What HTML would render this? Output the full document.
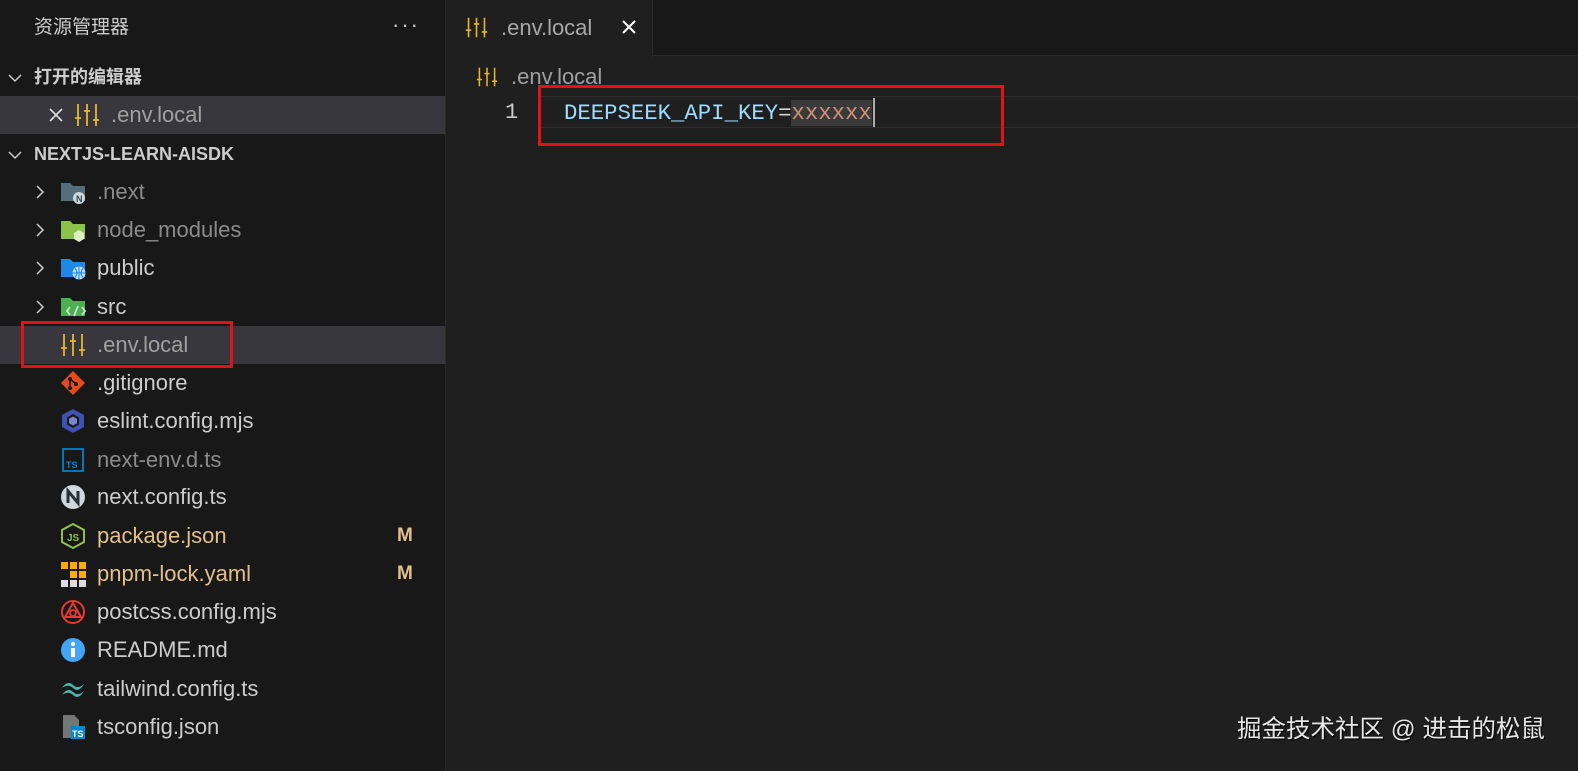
<!DOCTYPE html>
<html><head><meta charset="utf-8"><style>
*{margin:0;padding:0;box-sizing:border-box}
body{width:1578px;height:771px;background:#1f1f1f;overflow:hidden;position:relative;font-family:"Liberation Sans","Noto Sans CJK SC",sans-serif;color:#cccccc}
#side{position:absolute;left:0;top:0;width:446px;height:771px;background:#181818;border-right:1px solid #2b2b2b}
.t{position:absolute;font-size:22px;line-height:38px;white-space:nowrap}
.row{position:absolute;left:0;width:445px;height:38px}
.ic{position:absolute;width:26px;height:26px}
.chev{position:absolute;left:32px;width:16px;height:16px}
svg{display:block}
</style></head><body>
<div id="side">
  <div class="t" style="left:34px;top:9px;font-size:19px;color:#cccccc">资源管理器</div>
  <div class="t" style="left:392px;top:6px;font-size:22px;letter-spacing:2px;color:#ccc">···</div>
  <svg class="chev" style="left:7px;top:70px" viewBox="0 0 16 16"><path d="M2 5l6 6 6-6" stroke="#ccc" stroke-width="1.5" fill="none"/></svg>
  <div class="t" style="left:34px;top:58px;font-size:18px;font-weight:bold;color:#cccccc">打开的编辑器</div>
  <div class="row" style="top:96px;background:#37373d"></div>
  <svg style="position:absolute;left:47px;top:106px" width="18" height="18" viewBox="0 0 18 18"><path d="M3 3l12 12M15 3L3 15" stroke="#ddd" stroke-width="1.6"/></svg>
  <svg class="ic env" style="left:74px;top:102px" viewBox="0 0 26 26"><g stroke="#e8b72a" stroke-width="1.8" fill="none"><path d="M4 2v22M13 2v22M22 2v22M1 16h6M10 9h6M19 18h6"/></g></svg>
  <div class="t" style="left:111px;top:96px;color:#a0a0a0">.env.local</div>
  <svg class="chev" style="left:7px;top:147px" viewBox="0 0 16 16"><path d="M2 5l6 6 6-6" stroke="#ccc" stroke-width="1.5" fill="none"/></svg>
  <div class="t" style="left:34px;top:135px;font-size:18px;font-weight:bold;color:#cccccc">NEXTJS-LEARN-AISDK</div>

  <svg class="chev" style="top:184px" viewBox="0 0 16 16"><path d="M5 2l6 6-6 6" stroke="#ccc" stroke-width="1.5" fill="none"/></svg>
  <svg class="ic" style="left:60px;top:179px" viewBox="0 0 26 26"><path d="M1 4h9l3 3h12v15H1z" fill="#546e7a"/><circle cx="19" cy="19" r="6" fill="#cfd8dc"/><text x="16" y="23" font-size="9" font-weight="bold" fill="#37474f" font-family="Liberation Sans">N</text></svg>
  <div class="t" style="left:97px;top:173px;color:#8b8b8b">.next</div>

  <svg class="chev" style="top:222px" viewBox="0 0 16 16"><path d="M5 2l6 6-6 6" stroke="#ccc" stroke-width="1.5" fill="none"/></svg>
  <svg class="ic" style="left:60px;top:217px" viewBox="0 0 26 26"><path d="M1 4h9l3 3h12v15H1z" fill="#8bc34a"/><path d="M19 13l5 3v6l-5 3-5-3v-6z" fill="#dcedc8"/></svg>
  <div class="t" style="left:97px;top:211px;color:#8b8b8b">node_modules</div>

  <svg class="chev" style="top:260px" viewBox="0 0 16 16"><path d="M5 2l6 6-6 6" stroke="#ccc" stroke-width="1.5" fill="none"/></svg>
  <svg class="ic" style="left:60px;top:255px" viewBox="0 0 26 26"><path d="M1 4h9l3 3h12v15H1z" fill="#1e88e5"/><circle cx="19" cy="18" r="6.5" fill="#bbdefb"/><path d="M12.5 18h13M19 11.5v13M15 13.5q4 4.5 0 9M23 13.5q-4 4.5 0 9" stroke="#1e88e5" stroke-width="1" fill="none"/></svg>
  <div class="t" style="left:97px;top:249px">public</div>

  <svg class="chev" style="top:299px" viewBox="0 0 16 16"><path d="M5 2l6 6-6 6" stroke="#ccc" stroke-width="1.5" fill="none"/></svg>
  <svg class="ic" style="left:60px;top:294px" viewBox="0 0 26 26"><path d="M1 4h9l3 3h12v15H1z" fill="#4caf50"/><path d="M10 13l-3 4 3 4M22 13l3 4-3 4M18 12l-4 10" stroke="#c8e6c9" stroke-width="1.8" fill="none"/></svg>
  <div class="t" style="left:97px;top:288px">src</div>

  <div class="row" style="top:326px;background:#37373d"></div>
  <div style="position:absolute;left:21px;top:321px;width:212px;height:47px;border:3px solid #e0131a"></div>
  <svg class="ic" style="left:60px;top:332px" viewBox="0 0 26 26"><g stroke="#e8b72a" stroke-width="1.8" fill="none"><path d="M4 2v22M13 2v22M22 2v22M1 16h6M10 9h6M19 18h6"/></g></svg>
  <div class="t" style="left:97px;top:326px;color:#a0a0a0">.env.local</div>

  <svg class="ic" style="left:60px;top:370px" viewBox="0 0 26 26"><path d="M13 1l12 12-12 12L1 13z" fill="#e64a19"/><circle cx="10" cy="9" r="2" fill="#181818"/><circle cx="10" cy="18" r="2" fill="#181818"/><circle cx="16" cy="14" r="2" fill="#181818"/><path d="M10 9v9M10 9l6 5" stroke="#181818" stroke-width="1.6"/></svg>
  <div class="t" style="left:97px;top:364px">.gitignore</div>

  <svg class="ic" style="left:60px;top:408px" viewBox="0 0 26 26"><path d="M13 1l11 6v12l-11 6-11-6V7z" fill="#3f51b5"/><path d="M13 6l6 3.5v7L13 20l-6-3.5v-7z" fill="#181818"/><path d="M13 8.5l4 2.3v4.4L13 17.5l-4-2.3v-4.4z" fill="#7986cb"/></svg>
  <div class="t" style="left:97px;top:402px">eslint.config.mjs</div>

  <svg class="ic" style="left:60px;top:447px" viewBox="0 0 26 26"><rect x="3" y="2" width="20" height="22" fill="none" stroke="#0277bd" stroke-width="2"/><text x="6" y="21" font-size="9" font-weight="bold" fill="#0288d1" font-family="Liberation Sans">TS</text></svg>
  <div class="t" style="left:97px;top:441px;color:#8b8b8b">next-env.d.ts</div>

  <svg class="ic" style="left:60px;top:484px" viewBox="0 0 26 26"><circle cx="13" cy="13" r="12" fill="#cfd8dc"/><path d="M8 19V7l10 12V7" stroke="#263238" stroke-width="3" fill="none"/></svg>
  <div class="t" style="left:97px;top:478px">next.config.ts</div>

  <svg class="ic" style="left:60px;top:523px" viewBox="0 0 26 26"><path d="M13 1l11 6v12l-11 6-11-6V7z" fill="none" stroke="#8bc34a" stroke-width="2"/><text x="7" y="18" font-size="10" font-weight="bold" fill="#8bc34a" font-family="Liberation Sans">JS</text></svg>
  <div class="t" style="left:97px;top:517px;color:#e2c08d">package.json</div>
  <div class="t" style="left:397px;top:517px;color:#e2c08d;font-weight:bold;font-size:19px">M</div>

  <svg class="ic" style="left:60px;top:561px" viewBox="0 0 26 26"><g fill="#f9ad00"><rect x="1" y="1" width="7" height="7"/><rect x="10" y="1" width="7" height="7"/><rect x="19" y="1" width="7" height="7"/><rect x="19" y="10" width="7" height="7"/><rect x="10" y="10" width="7" height="7"/></g><g fill="#ddd"><rect x="1" y="19" width="7" height="7"/><rect x="10" y="19" width="7" height="7"/><rect x="19" y="19" width="7" height="7"/></g></svg>
  <div class="t" style="left:97px;top:555px;color:#e2c08d">pnpm-lock.yaml</div>
  <div class="t" style="left:397px;top:555px;color:#e2c08d;font-weight:bold;font-size:19px">M</div>

  <svg class="ic" style="left:60px;top:599px" viewBox="0 0 26 26"><circle cx="13" cy="13" r="11" fill="none" stroke="#e53935" stroke-width="2"/><path d="M13 4l8 14H5z" fill="none" stroke="#e53935" stroke-width="2"/><circle cx="13" cy="14" r="3" fill="none" stroke="#e53935" stroke-width="1.8"/></svg>
  <div class="t" style="left:97px;top:593px">postcss.config.mjs</div>

  <svg class="ic" style="left:60px;top:637px" viewBox="0 0 26 26"><circle cx="13" cy="13" r="12" fill="#42a5f5"/><rect x="11" y="11" width="4" height="9" fill="#fff"/><circle cx="13" cy="7" r="2.2" fill="#fff"/></svg>
  <div class="t" style="left:97px;top:631px">README.md</div>

  <svg class="ic" style="left:60px;top:676px" viewBox="0 0 26 26"><path d="M2 12C6 6 10 6 13 9C16 12 20 12 24 8C20 15 16 15 13 12C10 9 6 9 2 12Z" fill="#4db6ac"/><path d="M2 19C6 13 10 13 13 16C16 19 20 19 24 15C20 22 16 22 13 19C10 16 6 16 2 19Z" fill="#4db6ac"/></svg>
  <div class="t" style="left:97px;top:670px">tailwind.config.ts</div>

  <svg class="ic" style="left:60px;top:714px" viewBox="0 0 26 26"><path d="M3 1h11l5 5v18H3z" fill="#757575"/><rect x="11" y="12" width="14" height="13" fill="#0288d1"/><text x="12" y="23" font-size="9" font-weight="bold" fill="#fff" font-family="Liberation Sans">TS</text></svg>
  <div class="t" style="left:97px;top:708px">tsconfig.json</div>
</div>

<div style="position:absolute;left:447px;top:0;width:1131px;height:56px;background:#181818;border-bottom:1px solid #2b2b2b"></div>
<div style="position:absolute;left:447px;top:0;width:206px;height:57px;background:#1f1f1f;border-right:1px solid #2b2b2b"></div>
<svg style="position:absolute;left:465px;top:16px" width="23" height="23" viewBox="0 0 26 26"><g stroke="#e8b72a" stroke-width="1.8" fill="none"><path d="M4 2v22M13 2v22M22 2v22M1 16h6M10 9h6M19 18h6"/></g></svg>
<div class="t" style="left:501px;top:9px;color:#a8a8a8">.env.local</div>
<svg style="position:absolute;left:621px;top:19px" width="16" height="16" viewBox="0 0 16 16"><path d="M2 2l12 12M14 2L2 14" stroke="#fff" stroke-width="2"/></svg>

<svg style="position:absolute;left:476px;top:66px" width="22" height="22" viewBox="0 0 26 26"><g stroke="#e8b72a" stroke-width="1.8" fill="none"><path d="M4 2v22M13 2v22M22 2v22M1 16h6M10 9h6M19 18h6"/></g></svg>
<div class="t" style="left:511px;top:58px;color:#a0a0a0">.env.local</div>

<div style="position:absolute;left:540px;top:96px;width:1038px;height:32px;border-top:1px solid #2c2c2c;border-bottom:1px solid #2c2c2c"></div>
<div class="t" style="left:505px;top:94px;font-family:'Liberation Mono',monospace;font-size:22px;color:#cccccc">1</div>
<div class="t" style="left:564px;top:94px;font-family:'Liberation Mono',monospace;font-size:22.3px;color:#9cdcfe">DEEPSEEK_API_KEY<span style="color:#d4d4d4">=</span><span style="color:#ce9178;background:#3a3a3a">xxxxxx</span></div>
<div style="position:absolute;left:873px;top:98px;width:2px;height:29px;background:#aeafad"></div>
<div style="position:absolute;left:538px;top:85px;width:466px;height:61px;border:3px solid #e0131a"></div>

<div class="t" style="left:1237px;top:711px;font-size:24.5px;color:#e6e6e6;text-shadow:1px 1px 1px #000">掘金技术社区 @ 进击的松鼠</div>
</body></html>
